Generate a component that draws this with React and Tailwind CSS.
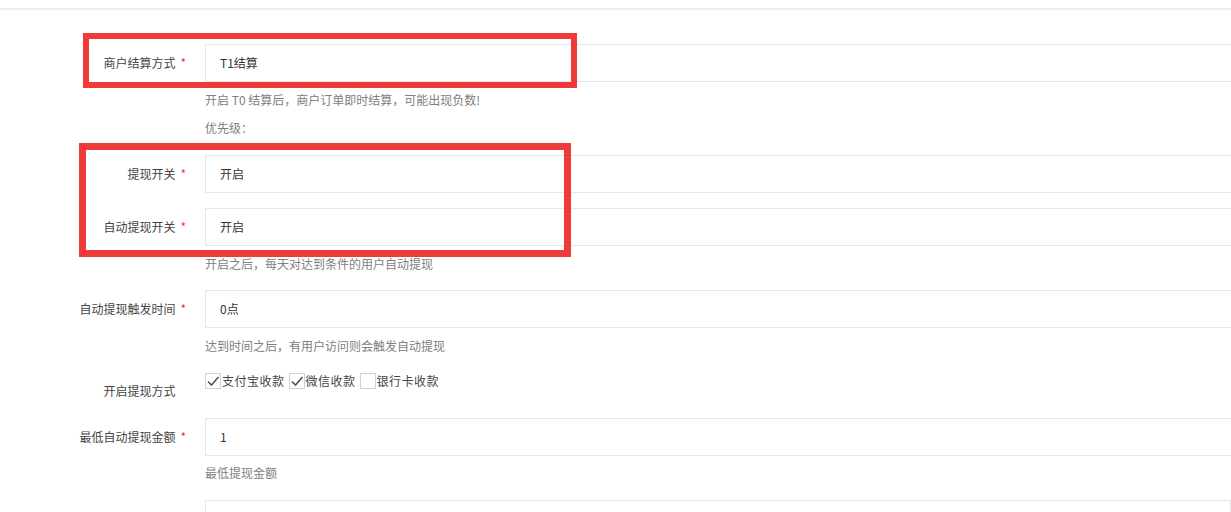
import React from 'react';

const font = { fontFamily: '"Noto Sans CJK SC", "Noto Sans", sans-serif' };

/* one row of the layui-like form: label on the left, wide input on the right */
const FormItem = ({ label, required = true, value, className = '' }) => (
  <div className={`flex ${className}`}>
    <label className="w-[205px] shrink-0 text-right pr-[19px] py-[9px] leading-[20px] text-[12px] text-[#444]">
      {label}
      <span className={`ml-[5px] text-[#ff3333] ${required ? '' : 'invisible'}`}>*</span>
    </label>
    <div className="w-[1100px] shrink-0 h-[38px] border border-[#e6e6e6] bg-white pl-[14px] flex items-center text-[12px] text-[#333]">
      {value}
    </div>
  </div>
);

const Help = ({ children, className = '' }) => (
  <div className={`pl-[205px] leading-[20px] text-[12px] text-[#808080] ${className}`}>{children}</div>
);

const Check = ({ checked, label }) => (
  <div className="flex items-center">
    <span className="w-[16px] h-[16px] border border-[#d2d2d2] bg-white flex items-center justify-center">
      {checked && (
        <svg width="14" height="14" viewBox="0 0 14 14">
          <path d="M2 7.5 L5.5 11 L12.5 3" fill="none" stroke="#555" strokeWidth="1.6" />
        </svg>
      )}
    </span>
    <span className="ml-[1px] text-[12px] leading-[16px] tracking-[0.5px] text-[#444]">{label}</span>
  </div>
);

export default function App() {
  return (
    <div className="relative w-[1231px] h-[512px] overflow-hidden bg-white" style={font}>
      <div className="h-[8px]" />
      <div className="h-[2px] bg-[#ececec]" />

      <FormItem className="mt-[34px]" label="商户结算方式" value="T1结算" />
      <Help className="mt-[8px]">开启 T0 结算后，商户订单即时结算，可能出现负数!</Help>
      <Help className="mt-[8px]">优先级：</Help>

      <FormItem className="mt-[17px]" label="提现开关" value="开启" />
      <FormItem className="mt-[15px]" label="自动提现开关" value="开启" />
      <Help className="mt-[8px]">开启之后，每天对达到条件的用户自动提现</Help>

      <FormItem className="mt-[16px]" label="自动提现触发时间" value="0点" />
      <Help className="mt-[8px]">达到时间之后，有用户访问则会触发自动提现</Help>

      <div className="flex mt-[16px] h-[38px]">
        <label className="w-[205px] shrink-0 text-right pr-[19px] pt-[9px] leading-[20px] text-[12px] text-[#444]">
          开启提现方式
          <span className="ml-[5px] invisible">*</span>
        </label>
        <div className="flex items-start gap-[4px] pt-[1px]">
          <Check checked label="支付宝收款" />
          <Check checked label="微信收款" />
          <Check label="银行卡收款" />
        </div>
      </div>

      <FormItem className="mt-[8px]" label="最低自动提现金额" value="1" />
      <Help className="mt-[7px]">最低提现金额</Help>

      <div className="flex mt-[17px]">
        <div className="w-[205px] shrink-0" />
        <div className="w-[1100px] h-[38px] border border-[#e6e6e6] bg-white" />
      </div>

      {/* red annotation frames drawn over the form */}
      <div className="absolute left-[83px] top-[33px] w-[494px] h-[55px] border-[6px] border-[#f03a3a]" />
      <div className="absolute left-[79px] top-[143px] w-[492px] h-[114px] border-[7px] border-[#f03a3a]" />
    </div>
  );
}
